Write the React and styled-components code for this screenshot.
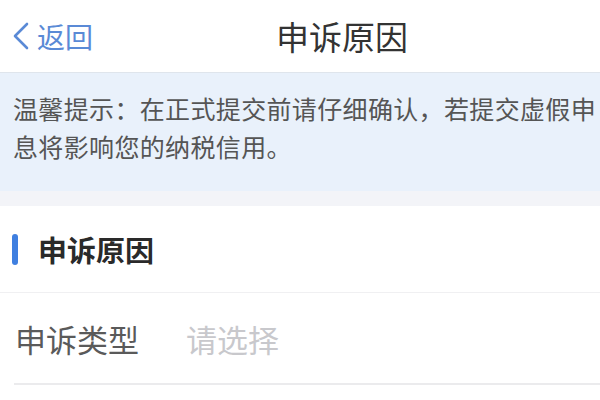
import React from "react";
import styled, { createGlobalStyle } from "styled-components";

const GlobalStyle = createGlobalStyle`
  html, body {
    margin: 0;
    padding: 0;
    background: #ffffff;
  }
  body {
    width: 600px;
    height: 400px;
    overflow: hidden;
    font-family: "Noto Sans CJK SC", "Noto Sans", sans-serif;
  }
`;

const Page = styled.div`
  width: 600px;
  height: 400px;
  display: flex;
  flex-direction: column;
  background: #fff;
  overflow: hidden;
`;

const Header = styled.header`
  height: 72px;
  flex-shrink: 0;
  display: grid;
  grid-template-columns: 276px auto;
  align-items: center;
  background: #fff;
  border-bottom: 1px solid #dfe5ec;
`;

const BackLink = styled.a`
  display: flex;
  align-items: center;
  gap: 6px;
  padding-left: 11px;
  color: #5a8ad6;
  font-size: 28px;
  text-decoration: none;
  line-height: 1;
  svg {
    width: 20px;
    height: 28px;
  }
`;

const Title = styled.h1`
  margin: 0;
  font-size: 33px;
  font-weight: 400;
  color: #333;
  line-height: 1;
`;

const Notice = styled.div`
  background: #e9f1fb;
  padding: 16px 0 26px 13px;
  color: #555;
  font-size: 25px;
  letter-spacing: 0.35px;
  line-height: 38px;
  border-bottom: 15px solid #f3f4f8;
`;

const NoticeLine = styled.div`
  white-space: nowrap;
`;

const SectionHead = styled.div`
  height: 86px;
  display: flex;
  align-items: center;
  gap: 20px;
  padding-left: 12px;
  border-bottom: 1px solid #f0f0f2;
`;

const Bar = styled.span`
  width: 6px;
  height: 31px;
  border-radius: 3px;
  background: #3f7fe0;
`;

const SectionTitle = styled.h2`
  margin: 0;
  font-size: 29px;
  font-weight: 700;
  color: #2a2a2a;
  line-height: 1;
`;

const FieldRow = styled.div`
  height: 90px;
  margin-left: 14px;
  display: flex;
  align-items: center;
  border-bottom: 2px solid #ebebed;
`;

const FieldLabel = styled.span`
  width: 171px;
  padding-left: 1px;
  font-size: 31px;
  color: #5a5a5a;
`;

const FieldValue = styled.span`
  font-size: 31px;
  color: ${({ $empty }) => ($empty ? "#c8c8cc" : "#333")};
`;

const App = () => {
  return (
    <Page>
      <GlobalStyle />
      <Header>
        <BackLink href="#">
          <svg viewBox="0 0 20 28" fill="none">
            <path
              d="M16 2 L4 14 L16 26"
              stroke="#5a8ad6"
              strokeWidth="2.6"
              strokeLinecap="round"
              strokeLinejoin="round"
            />
          </svg>
          返回
        </BackLink>
        <Title>申诉原因</Title>
      </Header>
      <Notice>
        <NoticeLine>温馨提示：在正式提交前请仔细确认，若提交虚假申</NoticeLine>
        <NoticeLine>息将影响您的纳税信用。</NoticeLine>
      </Notice>
      <SectionHead>
        <Bar />
        <SectionTitle>申诉原因</SectionTitle>
      </SectionHead>
      <FieldRow>
        <FieldLabel>申诉类型</FieldLabel>
        <FieldValue $empty>请选择</FieldValue>
      </FieldRow>
    </Page>
  );
};

export default App;
